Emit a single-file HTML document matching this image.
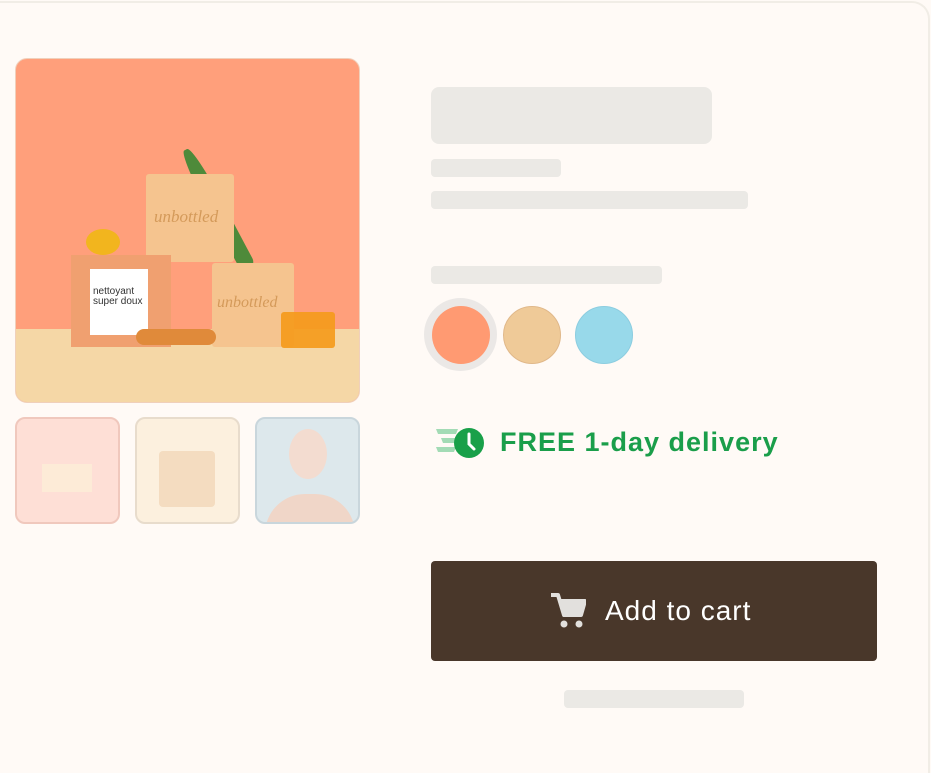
<!DOCTYPE html>
<html><head><style>
*{margin:0;padding:0;box-sizing:border-box}
html,body{width:931px;height:773px;overflow:hidden}
body{background:#fffaf6;font-family:"Liberation Sans",sans-serif;position:relative}
.frame{position:absolute;left:-10px;top:1px;width:940px;height:772px;border:2px solid #f1ede6;border-bottom:none;border-radius:0 18px 0 0}
.sk{position:absolute;background:#ebe9e5;border-radius:4px}
.a{position:absolute}
.c{position:absolute;border-radius:50%}
</style></head><body>
<div class="frame"></div>
<div class="a" style="left:15px;top:58px;width:345px;height:345px;border-radius:12px;overflow:hidden;background:#ff9f7b;border:1px solid #f0d0bb">
 <div class="a" style="left:0;top:270px;width:345px;height:75px;background:#f5d7a6"></div>
 <div class="a" style="left:225px;top:75px;width:16px;height:135px;background:#4e8a3a;border-radius:50% 50% 10px 10px;transform:rotate(-28deg);transform-origin:bottom"></div>
 <div class="a" style="left:130px;top:115px;width:88px;height:88px;background:#f5c48f;border-radius:3px"></div>
 <div class="a" style="left:138px;top:148px;font:italic 17px 'Liberation Serif',serif;color:#d49a5a">unbottled</div>
 <div class="a" style="left:196px;top:204px;width:82px;height:84px;background:#f5c48f;border-radius:3px"></div>
 <div class="a" style="left:201px;top:235px;font:italic 16px 'Liberation Serif',serif;color:#d49a5a">unbottled</div>
 <div class="a" style="left:55px;top:196px;width:100px;height:92px;background:#f0a070"></div>
 <div class="a" style="left:74px;top:210px;width:58px;height:66px;background:#fff"></div>
 <div class="a" style="left:77px;top:228px;font-size:10px;line-height:10px;color:#333">nettoyant<br>super doux</div>
 <div class="c" style="left:70px;top:170px;width:34px;height:26px;background:#f2b51e"></div>
 <div class="a" style="left:265px;top:253px;width:54px;height:36px;background:#f59a1a;border-radius:3px;opacity:.9"></div>
 <div class="a" style="left:120px;top:270px;width:80px;height:16px;background:#e08a3a;border-radius:8px"></div>
</div>
<div class="a" style="left:15px;top:417px;width:105px;height:107px;border-radius:10px;background:#fedfd6;border:2px solid #f0c8bd"><div class="a" style="left:25px;top:45px;width:50px;height:28px;background:#fdebd7"></div></div>
<div class="a" style="left:135px;top:417px;width:105px;height:107px;border-radius:10px;background:#fcf0de;border:2px solid #e8dccc"><div class="a" style="left:22px;top:32px;width:56px;height:56px;background:#f4dcc0;border-radius:4px"></div></div>
<div class="a" style="left:255px;top:417px;width:105px;height:107px;border-radius:10px;background:#dde8ec;border:2px solid #c9d6dc;overflow:hidden"><div class="c" style="left:32px;top:10px;width:38px;height:50px;background:#f3dcd0"></div><div class="a" style="left:8px;top:75px;width:90px;height:40px;background:#f0d6c8;border-radius:40px 40px 0 0"></div></div>
<div class="sk" style="left:431px;top:87px;width:281px;height:57px;border-radius:8px"></div>
<div class="sk" style="left:431px;top:159px;width:130px;height:18px"></div>
<div class="sk" style="left:431px;top:191px;width:317px;height:18px"></div>
<div class="sk" style="left:431px;top:266px;width:231px;height:18px"></div>
<div class="c" style="left:424px;top:298px;width:73px;height:73px;background:#ebe8e6"></div>
<div class="c" style="left:432px;top:306px;width:58px;height:58px;background:#ff9a72"></div>
<div class="c" style="left:503px;top:306px;width:58px;height:58px;background:#efca98;border:1px solid #e0b88a"></div>
<div class="c" style="left:575px;top:306px;width:58px;height:58px;background:#98d9ea;border:1px solid #8ccde0"></div>
<svg class="a" style="left:434px;top:427px" width="52" height="32" viewBox="0 0 52 32">
<path d="M2 2h22l-2 5H4zM7 11h18l-2 5H9zM2 20h20l-2 5H4z" fill="#a3dbb5"/>
<circle cx="35" cy="16" r="15" fill="#19a049"/>
<path d="M35 7v10l5 5" stroke="#fff" stroke-width="3" fill="none" stroke-linecap="round"/>
</svg>
<div class="a" style="left:500px;top:427px;font-size:27px;font-weight:bold;color:#1a9e4a;letter-spacing:1px">FREE 1-day delivery</div>
<div class="a" style="left:431px;top:561px;width:446px;height:100px;background:#49372a;border-radius:4px"></div>
<svg class="a" style="left:550px;top:591px" width="36" height="38" viewBox="0 0 36 38">
<path d="M1 4h7l6 20h17l4-14H11" fill="none" stroke="#e2e0dd" stroke-width="4" stroke-linejoin="round"/>
<path d="M11 10h24l-4 14H14z" fill="#e2e0dd"/>
<circle cx="14" cy="33" r="3.5" fill="#e2e0dd"/><circle cx="29" cy="33" r="3.5" fill="#e2e0dd"/>
</svg>
<div class="a" style="left:605px;top:595px;font-size:28px;color:#fff;letter-spacing:1px">Add to cart</div>
<div class="sk" style="left:564px;top:690px;width:180px;height:18px"></div>
</body></html>
